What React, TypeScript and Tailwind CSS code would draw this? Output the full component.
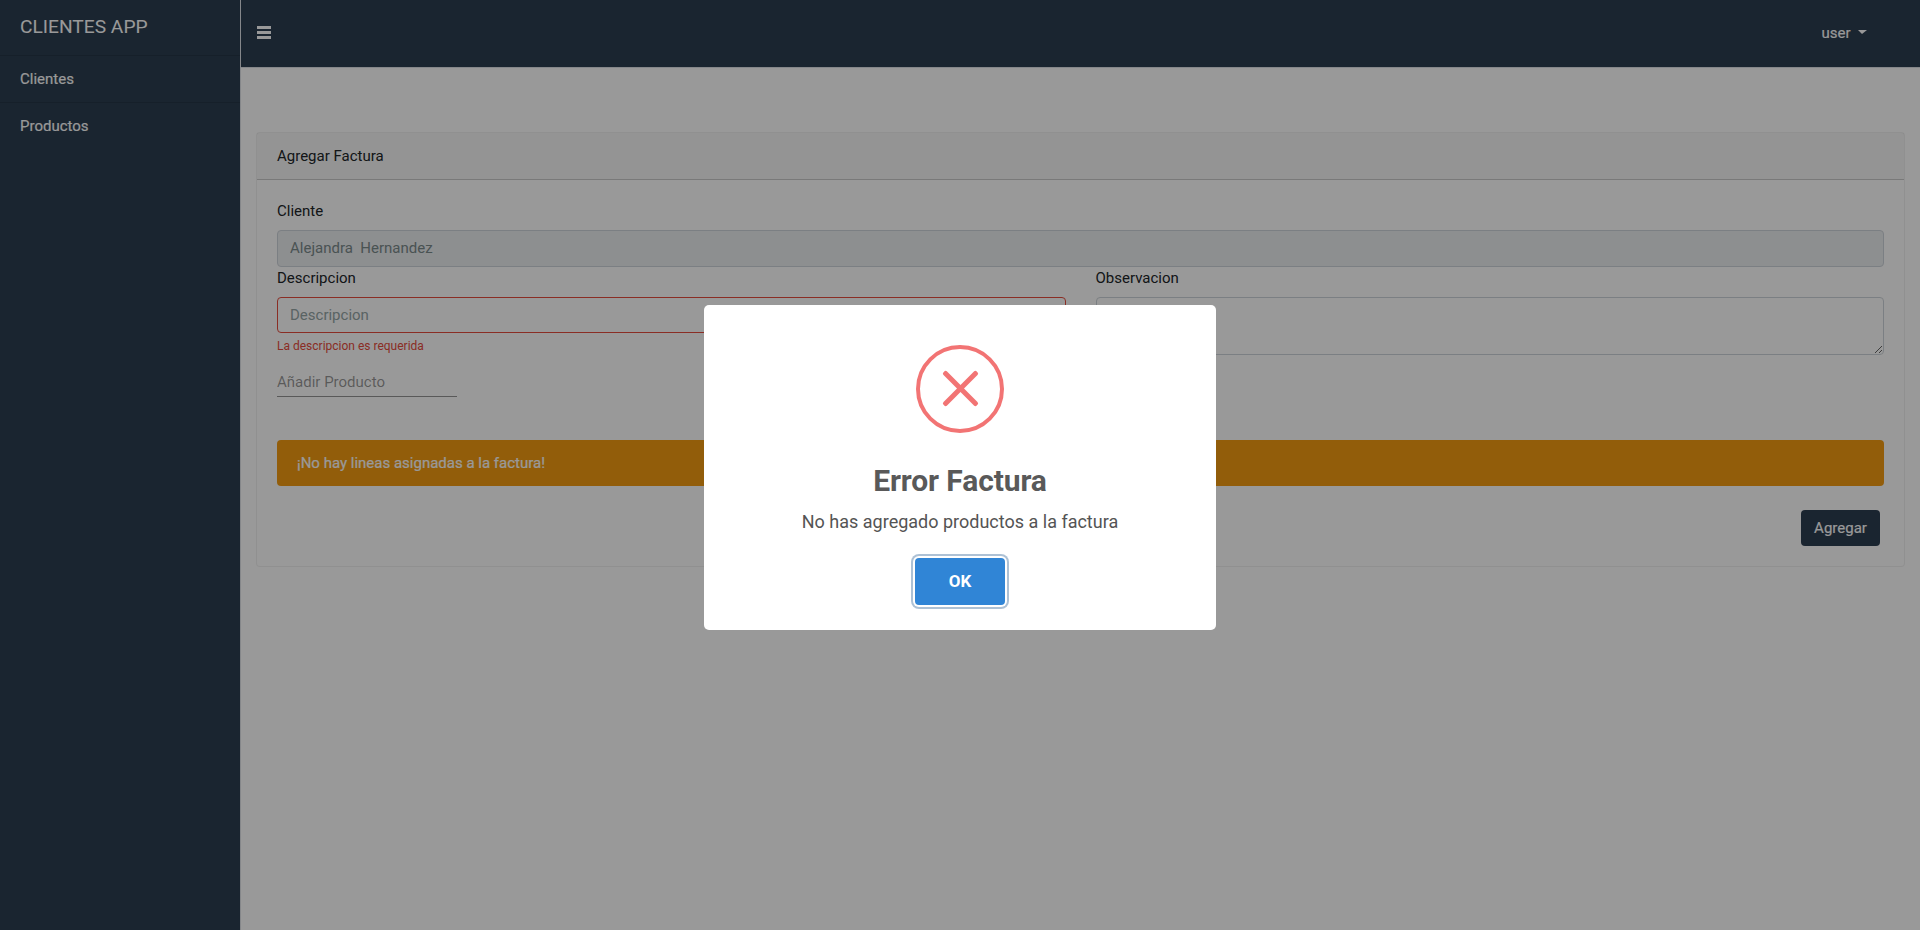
import React from "react";

const inputBase =
  "block w-full rounded-[4px] border px-3 text-[15px] leading-[22.5px] outline-none placeholder:text-[#95a5a6] placeholder:opacity-100";

function Sidebar() {
  return (
    <aside className="h-full w-[241px] shrink-0 border-r border-[#dee2e6] bg-[#2c3e50] text-white">
      <div className="h-[55px] px-5 pt-[13px] text-[19.2px] leading-[28.8px]">CLIENTES APP</div>
      <nav className="flex flex-col">
        <a href="#" className="h-[47px] border-t border-black/[0.125] px-5 pt-[12px] [-webkit-text-stroke:0.15px_white]">Clientes</a>
        <a href="#" className="h-[47px] border-t border-black/[0.125] px-5 pt-[12px] [-webkit-text-stroke:0.15px_white]">Productos</a>
      </nav>
    </aside>
  );
}

function Navbar() {
  return (
    <header className="flex h-[68px] items-center justify-between border-b border-[#dee2e6] bg-[#2c3e50] pl-4 pr-[53px] text-white">
      <button aria-label="Menu" className="mb-[3px] flex w-[14px] flex-col gap-[2px]">
        <span className="h-[3px] w-full bg-white" />
        <span className="h-[3px] w-full bg-white" />
        <span className="h-[3px] w-full bg-white" />
      </button>
      <button className="flex items-center gap-[7.5px] [-webkit-text-stroke:0.15px_white]">
        user
        <span className="mb-[3px] border-l-[4px] border-r-[5px] border-t-[4px] border-x-transparent border-t-white" />
      </button>
    </header>
  );
}

function InvoiceCard() {
  return (
    <section className="mx-[15px] mt-[64px] h-[435px] rounded-[4px] border border-black/[0.06] bg-white">
      <div className="h-[47px] border-b border-black/[0.18] bg-black/[0.03] px-5 pt-[12px]">Agregar Factura</div>
      <div className="px-5 pt-5">
        <label className="block h-[30px]">Cliente</label>
        <input disabled value="Alejandra  Hernandez" className={`${inputBase} h-[37px] border-[#ced4da] bg-[#ebeef1] pb-[7px] pt-[6px] text-[#7b8a8b]`} />
        <div className="grid grid-cols-2 gap-[30px]">
          <div>
            <label className="block h-[30px]">Descripcion</label>
            <input placeholder="Descripcion" className={`${inputBase} h-[36px] border-[#e74c3c] py-[6px]`} />
            <p className="mt-[4px] text-[12px] leading-[18px] text-[#e74c3c]">La descripcion es requerida</p>
          </div>
          <div>
            <label className="block h-[30px]">Observacion</label>
            <textarea className={`${inputBase} h-[58px] resize border-[#ced4da] py-[6px]`} />
          </div>
        </div>
        <input
          placeholder="Añadir Producto"
          className="mt-[11px] block h-[31px] w-[180px] border-b border-black/[0.42] pt-px outline-none placeholder:text-black/[0.42] placeholder:opacity-100"
        />
        <div className="mt-[43px] h-[46px] rounded-[4px] bg-[#f39c12] px-5 pt-[12px] text-white [-webkit-text-stroke:0.2px_white]">¡No hay lineas asignadas a la factura!</div>
        <div className="mt-6 flex justify-end pr-1">
          <button className="h-[36px] w-[79px] rounded-[4px] bg-[#2c3e50] text-white [-webkit-text-stroke:0.15px_white]">Agregar</button>
        </div>
      </div>
    </section>
  );
}

function ErrorDialog() {
  return (
    <div className="fixed inset-0 flex items-start justify-center bg-black/40 pt-[305px]">
      <div role="dialog" className="flex h-[325px] w-[512px] flex-col items-center rounded-[5px] bg-white pt-10">
        <svg width="88" height="88" viewBox="0 0 88 88" fill="#f27474">
          <circle cx="44" cy="44" r="42" fill="none" stroke="#f27474" strokeWidth="4" />
          <rect x="21" y="41" width="47" height="5" rx="2" transform="rotate(45 44.5 43.5)" />
          <rect x="21" y="41" width="47" height="5" rx="2" transform="rotate(-45 44.5 43.5)" />
        </svg>
        <h2 className="mt-[25px] text-[30px] font-bold leading-[45px] tracking-[-0.1px] text-[#595959]">Error Factura</h2>
        <p className="mt-[5px] text-[18px] leading-[27px] text-[#545454]">No has agregado productos a la factura</p>
        <button className="mt-[23px] h-[47px] w-[90px] rounded-[4px] bg-[#3085d6] text-[17px] font-bold text-white shadow-[0_0_0_2px_#fff,0_0_0_4px_rgba(50,100,150,0.4)]">
          OK
        </button>
      </div>
    </div>
  );
}

export default function App() {
  return (
    <div className="flex h-[930px] overflow-hidden bg-white font-[Roboto,sans-serif] text-[15px] leading-[22.5px] text-[#212529]">
      <Sidebar />
      <main className="min-w-0 flex-1">
        <Navbar />
        <InvoiceCard />
      </main>
      <ErrorDialog />
    </div>
  );
}
